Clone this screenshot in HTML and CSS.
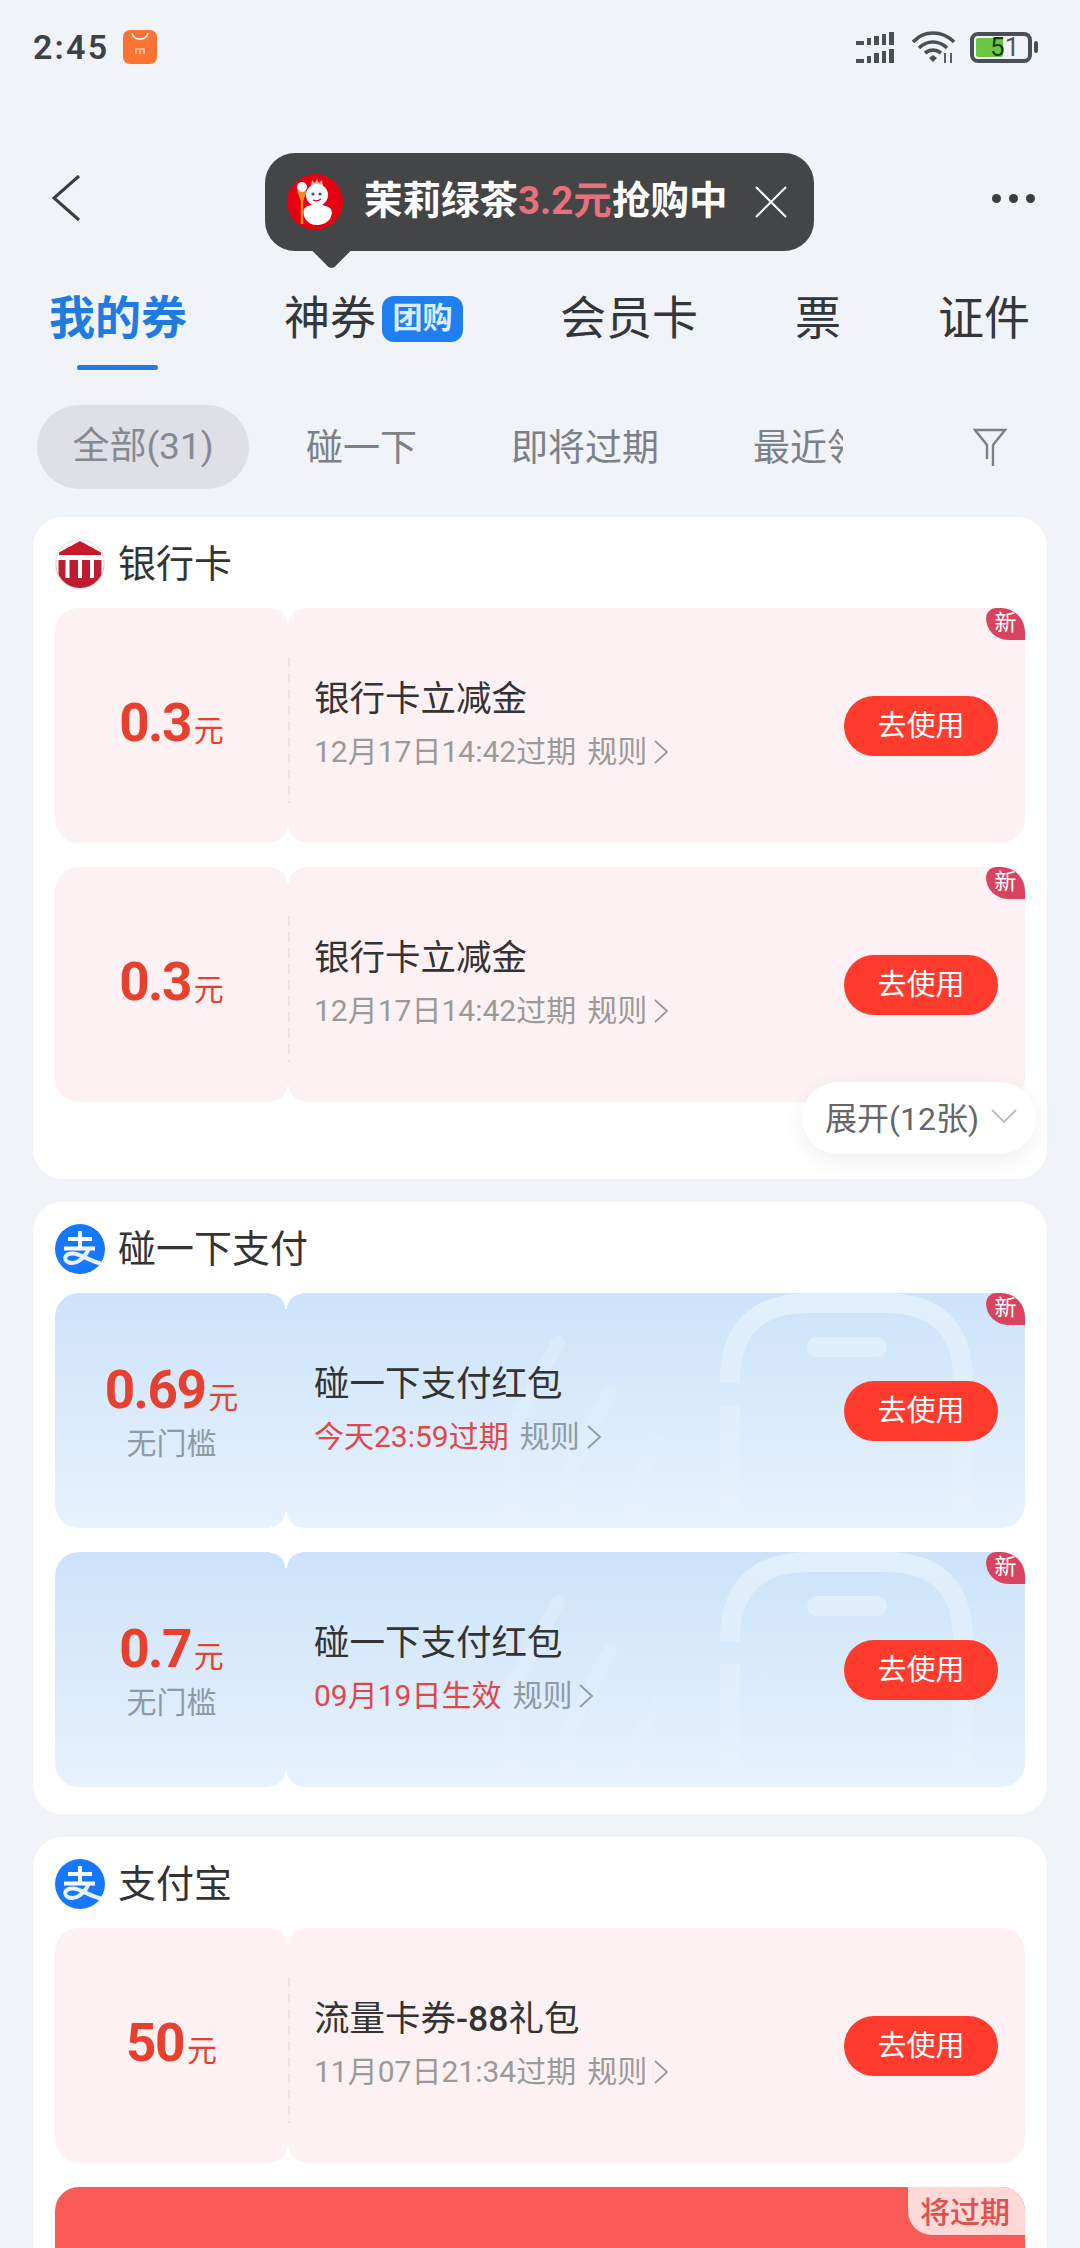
FILE: index.html
```html
<!DOCTYPE html>
<html lang="zh-CN">
<head>
<meta charset="utf-8">
<title>我的券</title>
<link rel="stylesheet" href="styles.css">
</head>
<body>
<svg class="defs" width="0" height="0" aria-hidden="true">
  <defs>
    <symbol id="alipay" viewBox="0 0 50 50">
      <circle cx="25" cy="25" r="25" fill="#1677ff"/>
      <g fill="none" stroke="#fff" stroke-width="4">
        <path d="M13 15H37M25 7V24M9 24.500H40"/>
        <path d="M33.500 25C30 34 21 41 14 38.500C7 36 10 28.500 19 29.500C28 31 36 37.500 46 39.500" stroke="#e8f3ff"/>
      </g>
    </symbol>
    <symbol id="rule-arrow" viewBox="0 0 16 26">
      <path d="M2 2L14 13L2 24" fill="none" stroke="currentColor" stroke-width="1.800"/>
    </symbol>
    <symbol id="phone" viewBox="0 0 735 235">
      <defs>
        <linearGradient id="fade" gradientUnits="userSpaceOnUse" x1="0" y1="0" x2="0" y2="235">
          <stop offset="0" stop-color="#fff" stop-opacity=".42"/>
          <stop offset=".55" stop-color="#fff" stop-opacity=".16"/>
          <stop offset="1" stop-color="#fff" stop-opacity=".04"/>
        </linearGradient>
      </defs>
      <g fill="none" stroke="url(#fade)">
        <path stroke-width="20" d="M440 90V88Q440 10 520 10H595Q673 10 673 88V215M440 112V215"/>
        <path stroke-width="20" stroke-linecap="round" d="M527 54H587"/>
        <path stroke-width="14" stroke-linecap="round" stroke-opacity=".6" d="M268 50L222 135V232M320 98L278 180V232M368 150L345 190V232"/>
      </g>
    </symbol>
  </defs>
</svg>

<div class="page">
  <div class="status">
    <span class="time">2:45</span>
    <svg class="mi" viewBox="0 0 34 34">
      <rect width="34" height="34" rx="7" fill="#fb7332"/>
      <path d="M9 3C10 11 24 11 25 3" fill="none" stroke="#fff" stroke-width="1.600"/>
      <path d="M13 24V19H21V24M17 20V24" fill="none" stroke="#ffe1d0" stroke-width="1.200"/>
    </svg>
    <div class="status-right">
      <svg class="signal" viewBox="0 0 40 31" fill="#4a4f55">
        <rect x="0" y="9" width="8" height="4"/><rect x="11" y="6" width="4" height="7"/><rect x="18" y="4" width="5" height="9"/><rect x="26" y="2" width="4" height="11"/><rect x="33" y="0" width="5" height="13"/>
        <rect x="0" y="27" width="8" height="4"/><rect x="11" y="24" width="4" height="7"/><rect x="18" y="21" width="5" height="10"/><rect x="26" y="19" width="4" height="12"/><rect x="33" y="17" width="5" height="14"/>
      </svg>
      <svg class="wifi" viewBox="0 0 44 32" fill="none" stroke="#4a4f55" stroke-width="3.600">
        <path d="M1 11C12 -1 30 -1 42 11"/>
        <path d="M7 17C15 9 27 9 35 17"/>
        <path d="M13 22C18 18 24 18 29 22"/>
        <path d="M17 27L21 31L25 27L21 24Z" fill="#4a4f55" stroke="none"/>
        <path d="M33 22V32M39 22V32" stroke-width="1.800"/>
      </svg>
      <div class="battery">
        <div class="battery-level"></div>
        <span class="battery-text"><b>5</b>1</span>
      </div>
      <div class="battery-tip"></div>
    </div>
  </div>

  <div class="nav">
    <svg class="back" viewBox="0 0 30 48">
      <path d="M28 2L3 24L28 46" fill="none" stroke="#3a3d42" stroke-width="3"/>
    </svg>
    <div class="more"><i></i><i></i><i></i></div>
  </div>

  <div class="tooltip">
    <svg class="tooltip-logo" viewBox="0 0 56 56">
      <circle cx="28" cy="28" r="28" fill="#e60012"/>
      <path d="M15 24V50" stroke="#f08a1d" stroke-width="2.500"/>
      <path d="M10 17H20L15 30Z" fill="#f08a1d"/>
      <circle cx="15" cy="13" r="5" fill="#fff"/>
      <path d="M24 12L25 6L28 9L30 5L32 9L35 6L36 12Z" fill="#f4b7a6"/>
      <circle cx="30" cy="21" r="11" fill="#fff"/>
      <circle cx="26" cy="20" r="1.600" fill="#2e4f9e"/><circle cx="33" cy="20" r="1.600" fill="#2e4f9e"/>
      <path d="M26 26Q30 28 34 25" stroke="#e60012" stroke-width="1.200" fill="none"/>
      <path d="M17 35C21 29 38 29 44 35C47 42 41 51 30 51C20 51 15 43 17 35Z" fill="#fff"/>
    </svg>
    <span class="tooltip-text">茉莉绿茶<em>3.2元</em>抢购中</span>
    <svg class="tooltip-close" viewBox="0 0 32 32">
      <path d="M1 1L31 31M31 1L1 31" stroke="#fff" stroke-width="2"/>
    </svg>
  </div>

  <div class="tabs">
    <div class="tab tab-active">我的券</div>
    <div class="tab tab-tagged">神券<span class="tag">团购</span></div>
    <div class="tab">会员卡</div>
    <div class="tab">票</div>
    <div class="tab">证件</div>
  </div>

  <div class="filters">
    <div class="filter-pill">全部(31)</div>
    <div class="filter-item">碰一下</div>
    <div class="filter-item">即将过期</div>
    <div class="filter-item filter-clip">最近领取</div>
    <svg class="filter-icon" viewBox="0 0 34 38">
      <path d="M14 31V17L2 2H32L20 17V38" fill="none" stroke="#7c8087" stroke-width="2.400"/>
    </svg>
  </div>

  <div class="list">
    <section class="card card-bank">
      <header class="card-head">
        <svg class="card-logo" viewBox="0 0 50 50">
          <defs><clipPath id="round"><circle cx="25" cy="25" r="24"/></clipPath></defs>
          <circle cx="25" cy="25" r="25" fill="#f4dadd"/>
          <circle cx="25" cy="25" r="24" fill="#fff"/>
          <g clip-path="url(#round)">
            <path d="M25 2L46 13.500V16H4V13.500Z" fill="#c6192e"/>
            <rect x="0" y="21" width="50" height="29" fill="#be1c30"/>
            <rect x="0" y="17" width="50" height="4" fill="#fff"/>
            <path d="M0 21H3.500V50H0ZM46.500 21H50V50H46.500ZM10.500 21H14.500V39H10.500ZM23 21H27V39H23ZM35 21H39V39H35Z" fill="#fff"/>
          </g>
        </svg>
        <span class="card-title">银行卡</span>
      </header>
      <div class="coupons">
        <article class="coupon coupon-pink">
          <div class="stub"><div class="amount">0.3<small>元</small></div></div>
          <div class="body">
            <div class="body-title">银行卡立减金</div>
            <div class="body-sub"><span>12月17日14:42过期</span><span class="rule">规则<svg class="rule-icon"><use href="#rule-arrow"/></svg></span></div>
          </div>
          <button class="use">去使用</button>
          <span class="badge">新</span>
        </article>
        <article class="coupon coupon-pink">
          <div class="stub"><div class="amount">0.3<small>元</small></div></div>
          <div class="body">
            <div class="body-title">银行卡立减金</div>
            <div class="body-sub"><span>12月17日14:42过期</span><span class="rule">规则<svg class="rule-icon"><use href="#rule-arrow"/></svg></span></div>
          </div>
          <button class="use">去使用</button>
          <span class="badge">新</span>
        </article>
      </div>
      <div class="expand">展开(12张)
        <svg class="expand-icon" viewBox="0 0 26 14"><path d="M1 1L13 13L25 1" fill="none" stroke="#bdbdbd" stroke-width="1.800"/></svg>
      </div>
    </section>

    <section class="card">
      <header class="card-head">
        <svg class="card-logo"><use href="#alipay"/></svg>
        <span class="card-title">碰一下支付</span>
      </header>
      <div class="coupons">
        <article class="coupon coupon-blue">
          <svg class="art"><use href="#phone"/></svg>
          <div class="stub"><div class="amount">0.69<small>元</small></div><div class="stub-note">无门槛</div></div>
          <div class="body">
            <div class="body-title">碰一下支付红包</div>
            <div class="body-sub"><span class="alert">今天23:59过期</span><span class="rule">规则<svg class="rule-icon"><use href="#rule-arrow"/></svg></span></div>
          </div>
          <button class="use">去使用</button>
          <span class="badge">新</span>
        </article>
        <article class="coupon coupon-blue">
          <svg class="art"><use href="#phone"/></svg>
          <div class="stub"><div class="amount">0.7<small>元</small></div><div class="stub-note">无门槛</div></div>
          <div class="body">
            <div class="body-title">碰一下支付红包</div>
            <div class="body-sub"><span class="alert">09月19日生效</span><span class="rule">规则<svg class="rule-icon"><use href="#rule-arrow"/></svg></span></div>
          </div>
          <button class="use">去使用</button>
          <span class="badge">新</span>
        </article>
      </div>
    </section>

    <section class="card">
      <header class="card-head">
        <svg class="card-logo"><use href="#alipay"/></svg>
        <span class="card-title">支付宝</span>
      </header>
      <div class="coupons">
        <article class="coupon coupon-pink">
          <div class="stub"><div class="amount">50<small>元</small></div></div>
          <div class="body">
            <div class="body-title">流量卡券<b class="title-num">-88</b>礼包</div>
            <div class="body-sub"><span>11月07日21:34过期</span><span class="rule">规则<svg class="rule-icon"><use href="#rule-arrow"/></svg></span></div>
          </div>
          <button class="use">去使用</button>
        </article>
        <article class="coupon coupon-red">
          <span class="badge-expiring">将过期</span>
        </article>
      </div>
    </section>
  </div>
</div>
</body>
</html>
```

FILE: styles.css
```css
* { box-sizing: border-box; }
html, body { margin: 0; padding: 0; }
body {
  font-family: Roboto, "Noto Sans CJK SC", sans-serif;
  color: #333;
  background: #f0f3f8;
}
.defs { position: absolute; }
.page {
  position: relative;
  width: 1080px;
  height: 2248px;
  overflow: hidden;
  background: #f0f3f8;
}

/* status bar */
.status {
  display: flex;
  align-items: center;
  height: 94px;
  padding: 0 42px 0 33px;
}
.time {
  font-size: 34px;
  font-weight: 600;
  letter-spacing: 2.200px;
  color: #3d4148;
}
.mi { width: 34px; height: 34px; margin-left: 14px; }
.status-right { display: flex; align-items: center; margin-left: auto; }
.signal { width: 40px; height: 31px; }
.wifi { width: 44px; height: 32px; margin-left: 16px; }
.battery {
  position: relative;
  width: 62px;
  height: 31px;
  margin-left: 14px;
  border: 4px solid #4a4f55;
  border-radius: 8px;
}
.battery-level {
  position: absolute;
  left: 2px;
  top: 2px;
  bottom: 2px;
  width: 27px;
  border-radius: 2px;
  background: #6cc644;
}
.battery-text {
  position: absolute;
  left: 16px;
  top: -3px;
  font-size: 26px;
  line-height: 29px;
  color: #555;
}
.battery-text b { font-weight: 400; color: #123d0c; }
.battery-tip {
  width: 4px;
  height: 12px;
  margin-left: 2px;
  border-radius: 2px;
  background: #4a4f55;
}

/* nav */
.nav {
  display: flex;
  align-items: center;
  justify-content: space-between;
  height: 80px;
  margin-top: 64px;
  padding: 0 45px 0 51px;
}
.back { width: 30px; height: 48px; }
.more { display: flex; gap: 8px; }
.more i { width: 9px; height: 9px; border-radius: 50%; background: #3a3d42; }

/* tooltip */
.tooltip {
  position: absolute;
  left: 265px;
  top: 153px;
  display: flex;
  align-items: center;
  width: 549px;
  height: 98px;
  padding-left: 22px;
  border-radius: 30px;
  background: #444546;
  color: #fff;
}
.tooltip::after {
  content: "";
  position: absolute;
  left: 52px;
  top: 82px;
  width: 29px;
  height: 29px;
  border-bottom-right-radius: 5px;
  background: #444546;
  transform: rotate(45deg);
}
.tooltip-logo { width: 56px; height: 56px; }
.tooltip-text {
  margin: 0 0 10px 21px;
  font-size: 38.500px;
  font-weight: 700;
  white-space: nowrap;
}
.tooltip-text em { font-style: normal; font-weight: 700; color: #e8707f; }
.tooltip-close { width: 32px; height: 32px; margin-left: 28px; }

/* tabs */
.tabs {
  display: flex;
  gap: 97px;
  height: 82px;
  margin-top: 50px;
  padding-left: 49px;
}
.tab {
  position: relative;
  display: flex;
  align-items: flex-start;
  font-size: 46px;
  line-height: 60px;
  white-space: nowrap;
  color: #33363b;
}
.tab-active { font-weight: 700; color: #1f7be0; }
.tab-active::after {
  content: "";
  position: absolute;
  left: 28px;
  width: 81px;
  height: 5px;
  top: 77px;
  border-radius: 3px;
  background: #2a77e0;
}
.tag {
  width: 81px;
  height: 46px;
  margin: 8px 0 0 6px;
  border-radius: 12px;
  background: #1f7fee;
  color: #dcebff;
  font-size: 30px;
  font-weight: 700;
  line-height: 44px;
  text-align: center;
}

/* filters */
.filters {
  display: flex;
  align-items: center;
  height: 84px;
  margin-top: 35px;
  padding: 0 73px 0 37px;
  color: #7c8087;
  font-size: 37px;
}
.filter-pill {
  width: 212px;
  height: 84px;
  border-radius: 42px;
  margin-right: 57px;
  background: #dee0e5;
  line-height: 84px;
  text-align: center;
  color: #858991;
}
.filter-item { margin: 0 94px 5px 0; white-space: nowrap; }
.filter-clip { width: 90px; margin-right: 0; overflow: hidden; }
.filter-icon { width: 34px; height: 38px; margin-left: auto; }

/* list */
.list {
  display: flex;
  flex-direction: column;
  gap: 23px;
  margin: 28px 33px 0;
}
.card {
  position: relative;
  padding: 22px 22px 27px;
  border-radius: 30px;
  background: #fff;
}
.card-bank { padding-bottom: 77px; }
.card-head {
  display: flex;
  align-items: center;
  gap: 13px;
  height: 50px;
  margin-bottom: 19px;
}
.card-logo { width: 50px; height: 50px; }
.card-title { font-size: 38px; color: #333; line-height: 50px; }
.coupons { display: flex; flex-direction: column; gap: 24px; }

/* coupon */
.coupon {
  position: relative;
  display: flex;
  align-items: center;
  height: 235px;
  border-radius: 24px;
  overflow: hidden;
}
.coupon::before,
.coupon::after {
  content: "";
  position: absolute;
  left: 217px;
  width: 32px;
  height: 16px;
  background:
    radial-gradient(circle at 0 100%, transparent 14.500px, #fff 15.500px) left / 50% 100% no-repeat,
    radial-gradient(circle at 100% 100%, transparent 14.500px, #fff 15.500px) right / 50% 100% no-repeat;
}
.coupon::before { top: 0; }
.coupon::after { bottom: 0; transform: scaleY(-1); }
.coupon-pink { background: #fef1f3; }
.coupon-pink .body::before {
  content: "";
  position: absolute;
  left: 233px;
  top: 49px;
  width: 2px;
  height: 146px;
  background: repeating-linear-gradient(#f6dde2 0 10px, transparent 10px 16px);
}
.coupon-blue { background: linear-gradient(#cde3fa, #e7f2fd); }
.coupon-blue::before, .coupon-blue::after { left: 215px; }
.coupon-red { height: 120px; background: #f85b55; border-radius: 24px 24px 0 0; }
.coupon-red::before, .coupon-red::after { display: none; }
.art { position: absolute; left: 235px; top: 0; width: 735px; height: 235px; }
.stub {
  position: relative;
  display: flex;
  flex-direction: column;
  align-items: center;
  gap: 1px;
  width: 233px;
  flex: none;
  padding-top: 3px;
}
.amount {
  font-size: 53px;
  font-weight: 700;
  line-height: 60px;
  letter-spacing: -1.500px;
  color: #e8402f;
  white-space: nowrap;
}
.amount small {
  margin-left: 3px;
  font-size: 30px;
  font-weight: 400;
  letter-spacing: 0;
}
.stub-note { margin-top: -5px; font-size: 30px; line-height: 40px; color: #8f9aa5; }
.body {
  position: relative;
  flex: 1;
  align-self: stretch;
  padding: 67px 0 0 26px;
}
.coupon-pink .body { position: static; }
.body-title {
  position: relative;
  font-size: 35.500px;
  line-height: 48px;
  color: #333;
  white-space: nowrap;
}
.title-num { font-weight: 500; }
.body-sub {
  position: relative;
  display: flex;
  align-items: center;
  gap: 11px;
  margin-top: 11px;
  font-size: 30px;
  line-height: 36px;
  color: #9a9a9a;
  white-space: nowrap;
}
.alert { color: #e04848; }
.coupon-blue .rule { color: #8f9aa5; }
.rule { display: flex; align-items: center; gap: 6px; }
.rule-icon { width: 16px; height: 26px; }
.use {
  position: relative;
  flex: none;
  width: 154px;
  height: 60px;
  margin-right: 27px;
  padding: 0;
  border: 0;
  border-radius: 30px;
  background: #ff3b2e;
  color: #fff;
  font: inherit;
  font-size: 29px;
  line-height: 60px;
}
.badge {
  position: absolute;
  right: 0;
  top: 0;
  width: 39px;
  height: 32px;
  border-radius: 10px 0 0 22px;
  background: #d8435f;
  color: #fff;
  font-size: 22px;
  line-height: 30px;
  text-align: center;
}
.badge-expiring {
  position: absolute;
  right: 0;
  top: 0;
  width: 117px;
  height: 48px;
  padding-right: 3px;
  border-radius: 0 0 0 24px;
  background: #ffd9d8;
  color: #e0504c;
  font-size: 30px;
  font-weight: 500;
  line-height: 51px;
  text-align: center;
}
.expand {
  position: absolute;
  right: 11px;
  bottom: 25px;
  display: flex;
  align-items: center;
  gap: 12px;
  width: 234px;
  height: 72px;
  padding: 0 0 4px 23px;
  border-radius: 36px;
  background: #fff;
  box-shadow: 0 6px 22px rgba(40, 40, 60, .07);
  font-size: 32px;
  color: #666;
  white-space: nowrap;
}
.expand-icon { width: 26px; height: 14px; }
```
